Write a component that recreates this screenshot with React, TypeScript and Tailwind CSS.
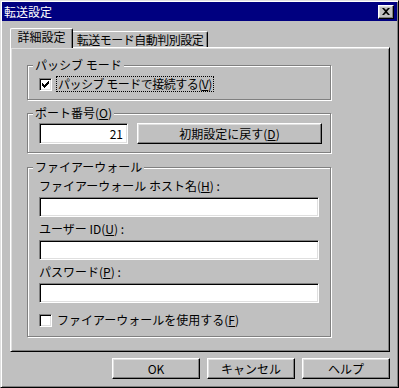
import type { ReactNode } from 'react'

const raised =
  'bg-[#c0c0c0] border border-t-white border-l-white border-r-black border-b-black shadow-[inset_-1px_-1px_0_#808080,inset_1px_1px_0_#dfdfdf]'
const sunken =
  'bg-white border border-t-[#808080] border-l-[#808080] border-r-white border-b-white shadow-[inset_1px_1px_0_#000,inset_-1px_-1px_0_#dfdfdf]'

function Group({ title, className, children }: { title: ReactNode; className: string; children: ReactNode }) {
  return (
    <div
      className={`relative w-[304px] border border-[#808080] shadow-[inset_1px_1px_0_#fff,1px_1px_0_#fff] ${className}`}
    >
      <span className="absolute left-[5px] -top-[7px] bg-[#c0c0c0] px-[2px] h-[12px] whitespace-nowrap">{title}</span>
      {children}
    </div>
  )
}

function CheckBox({ checked }: { checked?: boolean }) {
  return (
    <div className={`w-[13px] h-[13px] shrink-0 flex items-center justify-center ${sunken}`}>
      {checked && (
        <svg width="7" height="7" viewBox="0 0 7 7">
          <path d="M0 2h1v1h1v1h1V3h1V2h1V1h1V0h1v3H6v1H5v1H4v1H3v1H2V6H1V5H0z" fill="#000" />
        </svg>
      )}
    </div>
  )
}

function Field({ label }: { label: ReactNode }) {
  return (
    <>
      <div className="h-[12px] whitespace-nowrap">{label}</div>
      <div className={`mt-[5px] h-[20px] w-[280px] ${sunken}`} />
    </>
  )
}

export default function App() {
  return (
    <div className="w-[399px] h-[388px] bg-[#c0c0c0] border border-t-[#dfdfdf] border-l-[#dfdfdf] border-r-black border-b-black shadow-[inset_1px_1px_0_#fff,inset_-1px_-1px_0_#808080] p-[1px] flex flex-col text-[12px] leading-[12px] text-black font-['Noto_Sans_CJK_JP','Liberation_Sans',sans-serif] select-none overflow-hidden">
      {/* title bar */}
      <div className="h-[19px] bg-[#000080] flex items-center justify-between pl-[2px] pr-[3px]">
        <span className="text-white">転送設定</span>
        <div className={`w-[16px] h-[14px] flex items-center justify-center ${raised}`}>
          <svg width="8" height="7" viewBox="0 0 8 7">
            <path d="M0 0h2l2 2 2-2h2L5 3.5 8 7H6L4 5 2 7H0l3-3.5z" fill="#000" />
          </svg>
        </div>
      </div>

      <div className="flex flex-col pl-[8px] pr-[7px] pt-[7px]">
        {/* tabs */}
        <div className="h-[19px] flex items-end">
          <div className="relative z-10 -mb-px h-[20px] w-[63px] bg-[#c0c0c0] border-t border-l border-r border-t-white border-l-white border-r-black shadow-[inset_-1px_0_0_#808080] rounded-t-[2px] flex items-center justify-center pb-[3px]">
            詳細設定
          </div>
          <div className="h-[16px] w-[135px] border-t border-r border-t-white border-r-black shadow-[inset_-1px_0_0_#808080] rounded-tr-[2px] flex items-center justify-center whitespace-nowrap tracking-[-0.5px]">
            転送モード自動判別設定
          </div>
        </div>

        {/* panel */}
        <div className="h-[305px] border border-t-white border-l-white border-r-black border-b-black shadow-[inset_1px_1px_0_#dfdfdf,inset_-1px_-1px_0_#808080] pl-[16px] pt-[17px] flex flex-col">
          <Group title="パッシブ モード" className="pl-[11px] pt-[10px] pb-[7px]">
            <div className="h-[16px] flex items-center">
              <CheckBox checked />
              <div className="ml-[4px] h-[16px] px-[1px] flex items-center border border-dotted border-black whitespace-nowrap tracking-[-0.5px]">
                パッシブ モードで接続する(<u>V</u>)
              </div>
            </div>
          </Group>

          <Group title={<>ポート番号(<u>O</u>)</>} className="mt-[13px] pl-[11px] pt-[9px] pb-[8px] flex">
            <div className={`h-[21px] w-[89px] flex items-center justify-end pr-[4px] ${sunken}`}>21</div>
            <div className={`ml-[9px] h-[21px] w-[185px] flex items-center justify-center ${raised}`}>
              初期設定に戻す(<u>D</u>)
            </div>
          </Group>

          <Group title="ファイアーウォール" className="mt-[14px] pl-[11px] pt-[12px] pb-[8px] flex flex-col">
            <Field label={<>ファイアーウォール ホスト名(<u>H</u>) :</>} />
            <div className="mt-[6px]" />
            <Field label={<>ユーザー ID(<u>U</u>) :</>} />
            <div className="mt-[6px]" />
            <Field label={<>パスワード(<u>P</u>) :</>} />
            <div className="mt-[9px] h-[16px] flex items-center">
              <CheckBox />
              <div className="ml-[5px] whitespace-nowrap">
                ファイアーウォールを使用する(<u>F</u>)
              </div>
            </div>
          </Group>
        </div>

        {/* buttons */}
        <div className="mt-[6px] flex justify-end gap-[7px]">
          <div className={`h-[21px] w-[88px] flex items-center justify-center ${raised}`}>OK</div>
          <div className={`h-[21px] w-[88px] flex items-center justify-center ${raised}`}>キャンセル</div>
          <div className={`h-[21px] w-[88px] flex items-center justify-center ${raised}`}>ヘルプ</div>
        </div>
      </div>
    </div>
  )
}
